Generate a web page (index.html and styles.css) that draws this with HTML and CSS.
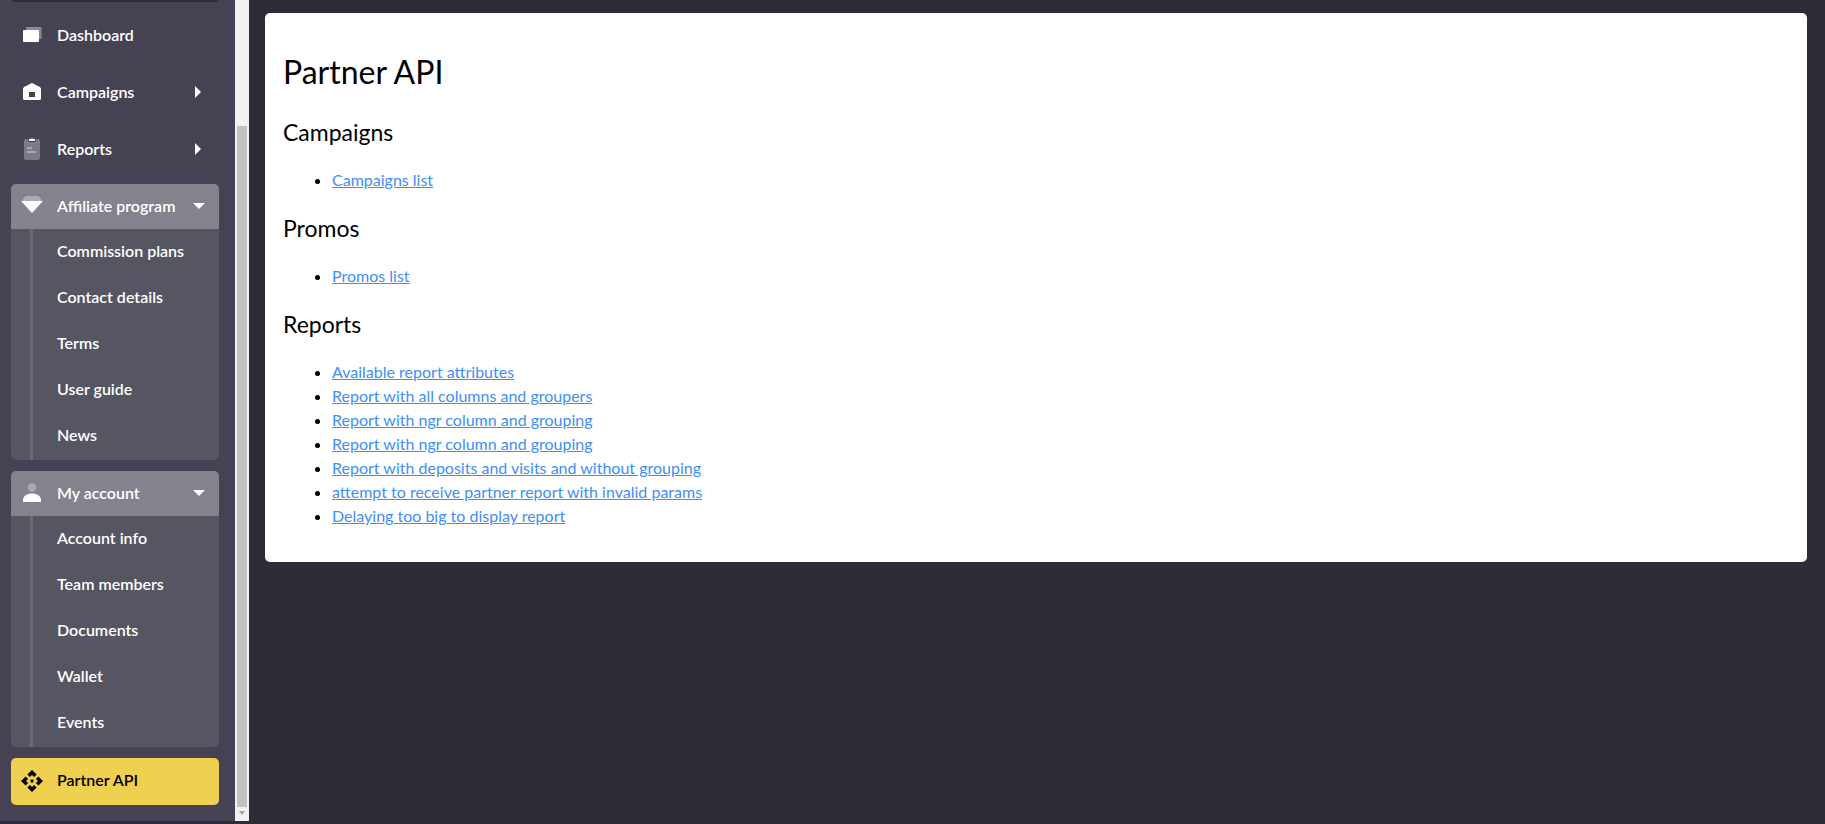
FILE: index.html
```
<!DOCTYPE html>
<html lang="en">

<head>
    <meta charset="UTF-8">
    <meta name="viewport" content="width=device-width, initial-scale=1.0">
    <title>Partner API</title>
    <link rel="stylesheet" href="styles.css">
</head>

<body>

    <div class="layout">
        <aside class="sidebar">
            <nav class="menu">
                <div class="menu-box"></div>

                <a class="menu-item" href="#">
                    <svg class="icon" viewBox="0 0 22 22">
                        <path fill="#8a8894" d="M5 3h14.500a1 1 0 0 1 1 1v10a1 1 0 0 1-1 1H5z" />
                        <rect x="2" y="6" width="16" height="12" rx="1" fill="#fff" />
                    </svg>
                    <span>Dashboard</span>
                </a>

                <button class="menu-item" type="button">
                    <svg class="icon" viewBox="0 0 22 22">
                        <path fill="#fff" fill-rule="evenodd" d="M11 2l7.500 3.800Q20 6.500 20 8v9.500q0 1.500-1.500 1.500h-15Q2 19 2 17.500V8q0-1.500 1.500-2.200zM8 11v5h6v-5z" />
                    </svg>
                    <span>Campaigns</span>
                    <svg class="arrow" viewBox="0 0 12 12"><path d="M2 0l6 6-6 6z" /></svg>
                </button>

                <button class="menu-item" type="button">
                    <svg class="icon" viewBox="0 0 22 22">
                        <rect x="3" y="1" width="16" height="21" rx="2" fill="#7c7a87" />
                        <path fill="#aaa8b2" d="M6 9h5v2H6zM6 13h9v2H6z" />
                        <path fill="#454353" d="M7 1h8v3H7z" />
                        <path fill="#fff" d="M8 1h1.500q1.500-1.500 3 0H14v2H8z" />
                    </svg>
                    <span>Reports</span>
                    <svg class="arrow" viewBox="0 0 12 12"><path d="M2 0l6 6-6 6z" /></svg>
                </button>

                <div class="menu-group">
                    <button class="menu-item group-title" type="button" aria-expanded="true">
                        <svg class="icon" viewBox="0 0 22 22">
                            <path fill="#acabb2" d="M4.500 1h13L21.500 6H.5z" />
                            <path fill="#fff" d="M0 6h22L11 18z" />
                        </svg>
                        <span>Affiliate program</span>
                        <svg class="arrow" viewBox="0 0 12 12"><path d="M0 3h12L6 9z" /></svg>
                    </button>
                    <div class="submenu">
                        <a href="#">Commission plans</a>
                        <a href="#">Contact details</a>
                        <a href="#">Terms</a>
                        <a href="#">User guide</a>
                        <a href="#">News</a>
                    </div>
                </div>

                <div class="menu-group">
                    <button class="menu-item group-title" type="button" aria-expanded="true">
                        <svg class="icon" viewBox="0 0 22 22">
                            <circle cx="11" cy="5.500" r="4.200" fill="#acabb2" />
                            <path fill="#fff" d="M2 20v-2c0-4 4-6.500 9-6.500s9 2.500 9 6.500v2z" />
                        </svg>
                        <span>My account</span>
                        <svg class="arrow" viewBox="0 0 12 12"><path d="M0 3h12L6 9z" /></svg>
                    </button>
                    <div class="submenu">
                        <a href="#">Account info</a>
                        <a href="#">Team members</a>
                        <a href="#">Documents</a>
                        <a href="#">Wallet</a>
                        <a href="#">Events</a>
                    </div>
                </div>

                <a class="menu-item active" href="#">
                    <svg class="icon" viewBox="1 1 22 22">
                        <path d="M14 12l-2 2-2-2 2-2 2 2zm-2-6l2.120 2.120 2.500-2.500L12 1 7.380 5.620l2.500 2.500L12 6zm-6 6l2.120-2.120-2.500-2.500L1 12l4.620 4.620 2.500-2.500L6 12zm12 0l-2.120 2.120 2.500 2.500L23 12l-4.620-4.620-2.500 2.500L18 12zm-6 6l-2.120-2.120-2.500 2.500L12 23l4.620-4.620-2.500-2.500L12 18z" />
                    </svg>
                    <span>Partner API</span>
                </a>
            </nav>

            <div class="scrollbar">
                <div class="scroll-thumb"></div>
                <svg class="scroll-arrow" viewBox="0 0 6 4"><path d="M0 0h6L3 4z" /></svg>
            </div>
        </aside>

        <main class="content">
            <div class="card">
                <h1>Partner API</h1>

                <h2>Campaigns</h2>
                <ul>
                    <li><a href="#">Campaigns list</a></li>
                </ul>

                <h2>Promos</h2>
                <ul>
                    <li><a href="#">Promos list</a></li>
                </ul>

                <h2>Reports</h2>
                <ul>
                    <li><a href="#">Available report attributes</a></li>
                    <li><a href="#">Report with all columns and groupers</a></li>
                    <li><a href="#">Report with ngr column and grouping</a></li>
                    <li><a href="#">Report with ngr column and grouping</a></li>
                    <li><a href="#">Report with deposits and visits and without grouping</a></li>
                    <li><a href="#">attempt to receive partner report with invalid params</a></li>
                    <li><a href="#">Delaying too big to display report</a></li>
                </ul>
            </div>
        </main>
    </div>

</body>

</html>
```
FILE: styles.css
```
* {
    box-sizing: border-box;
}

body {
    margin: 0;
    background-color: #2e2c36;
    color: #000;
    font-family: Lato, "Open Sans", sans-serif;
    font-size: 16px;
    line-height: 24px;
}

.layout {
    display: flex;
    height: 100vh;
}

/* sidebar */
.sidebar {
    display: flex;
    flex-shrink: 0;
    width: 249px;
    margin-bottom: 3px;
    background-color: #454353;
}

/* the menu is scrolled down to its last item */
.menu {
    flex: 1;
    display: flex;
    flex-direction: column;
    justify-content: flex-end;
    gap: 11px;
    padding: 0 16px 16px 11px;
    overflow: hidden;
}

.menu-box {
    flex-shrink: 0;
    height: 46px;
    border-radius: 4px;
    background-color: #2e2c36;
}

.menu-item {
    display: flex;
    align-items: center;
    flex-shrink: 0;
    gap: 14px;
    width: 100%;
    height: 46px;
    padding: 0 14px 2px 10px;
    border: none;
    border-radius: 5px;
    background: none;
    color: #fff;
    font-family: inherit;
    font-size: 16px;
    font-weight: 600;
    text-align: left;
    text-decoration: none;
    cursor: pointer;
}

.menu-item span {
    flex: 1;
    padding-bottom: 1px;
    white-space: nowrap;
}

.icon {
    flex-shrink: 0;
    width: 22px;
    height: 22px;
}

.arrow {
    flex-shrink: 0;
    width: 12px;
    height: 12px;
    fill: #fff;
}

.menu-group {
    flex-shrink: 0;
    border-radius: 5px;
    background-color: #565562;
    overflow: hidden;
}

.group-title {
    height: 45px;
    border-radius: 0;
    background-color: #84828c;
}

.submenu {
    margin-left: 19px;
    padding-bottom: 1px;
    border-left: 3px solid #6a6976;
}

.submenu a {
    display: block;
    padding: 10px 0 12px 24px;
    color: #fff;
    font-weight: 600;
    text-decoration: none;
}

.active {
    height: 47px;
    background-color: #efd050;
    color: #000;
}

/* scrollbar */
.scrollbar {
    display: flex;
    flex-direction: column;
    align-items: center;
    justify-content: flex-end;
    width: 14px;
    background-color: #f1f1f1;
}

.scroll-thumb {
    width: 10px;
    height: 83%;
    background-color: #c1c1c1;
}

.scroll-arrow {
    width: 6px;
    height: 4px;
    margin: 4px 0 6px;
    fill: #a3a3a3;
}

/* content */
.content {
    flex: 1;
    padding: 13px 18px 13px 16px;
}

.card {
    padding: 18px;
    border-radius: 5px;
    background-color: #fff;
    display: flow-root;
}

h1,
h2 {
    font-weight: 400;
}

h1 {
    margin: 19px 0 23px;
    font-size: 32px;
    line-height: 43px;
}

h2 {
    margin: 20px 0;
    font-size: 23px;
    line-height: 32px;
}

ul {
    margin: 16px 0;
    padding-left: 49px;
}

.card a {
    color: #3e8ef7;
}
```
